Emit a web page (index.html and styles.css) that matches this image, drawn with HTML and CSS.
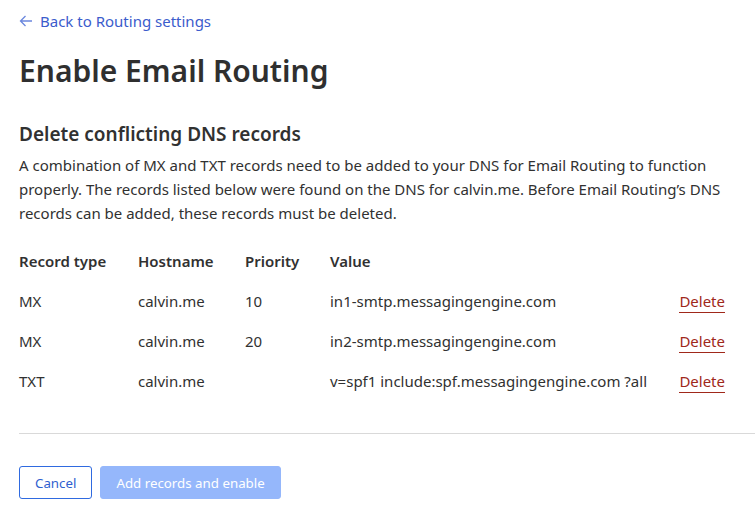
FILE: index.html
```html
<!DOCTYPE html>
<html>
<head>
<meta charset="utf-8">
<link rel="stylesheet" href="styles.css">
</head>
<body>
<div class="page">
  <a class="back" href="#"><svg class="arrow" width="14" height="14" viewBox="0 0 14 14"><path d="M13 7H1.5M6.5 2L1.5 7l5 5" fill="none" stroke="currentColor" stroke-width="1.3"/></svg>Back to Routing settings</a>
  <h1 class="title">Enable Email Routing</h1>
  <h2 class="subtitle">Delete conflicting DNS records</h2>
  <p class="desc">A combination of MX and TXT records need to be added to your DNS for Email Routing to function properly. The records listed below were found on the DNS for calvin.me. Before Email Routing’s DNS records can be added, these records must be deleted.</p>
  <div class="table">
    <div class="row head">
      <div class="c1">Record type</div><div class="c2">Hostname</div><div class="c3">Priority</div><div class="c4">Value</div><div class="c5"></div>
    </div>
    <div class="row">
      <div class="c1">MX</div><div class="c2">calvin.me</div><div class="c3">10</div><div class="c4">in1-smtp.messagingengine.com</div><div class="c5"><a class="del" href="#">Delete</a></div>
    </div>
    <div class="row">
      <div class="c1">MX</div><div class="c2">calvin.me</div><div class="c3">20</div><div class="c4">in2-smtp.messagingengine.com</div><div class="c5"><a class="del" href="#">Delete</a></div>
    </div>
    <div class="row">
      <div class="c1">TXT</div><div class="c2">calvin.me</div><div class="c3"></div><div class="c4">v=spf1 include:spf.messagingengine.com ?all</div><div class="c5"><a class="del" href="#">Delete</a></div>
    </div>
  </div>
  <hr class="divider">
  <div class="actions">
    <button class="btn cancel">Cancel</button>
    <button class="btn primary">Add records and enable</button>
  </div>
</div>
</body>
</html>
```
FILE: styles.css
```css
* { box-sizing: border-box; }
html, body { margin: 0; padding: 0; background: #fff; }
body {
  font-family: "Noto Sans", "Open Sans", sans-serif;
  color: #313131;
  font-size: 15px;
}
.page { padding: 10px 0 0 19px; }
.back {
  display: inline-flex;
  align-items: center;
  gap: 7px;
  color: #3b5ccc;
  text-decoration: none;
  font-size: 15px;
  line-height: 22px;
}
.arrow { color: #6b87de; }
.title {
  margin: 19px 0 0;
  font-size: 30px;
  font-weight: 600;
  line-height: 40px;
  color: #2f2f2f;
}
.subtitle {
  margin: 30px 0 0;
  font-size: 19px;
  font-weight: 600;
  line-height: 26px;
}
.desc {
  margin: 6px 0 0;
  line-height: 24px;
  max-width: 720px;
}
.table { margin-top: 26px; width: 706px; }
.row { display: flex; height: 40px; align-items: center; }
.row.head { font-weight: 600; height: 30px; align-items: flex-start; }
.c1 { width: 119px; }
.c2 { width: 107px; }
.c3 { width: 85px; }
.c4 { flex: 1; }
.c5 { width: 46px; text-align: right; }
.del {
  color: #a0281a;
  text-decoration: none;
  border-bottom: 1px solid #a0281a;
  padding-bottom: 1px;
}
.divider {
  margin: 32px 0 0;
  border: 0;
  border-top: 1px solid #d9d9d9;
}
.actions { display: flex; gap: 8px; margin-top: 32px; }
.btn {
  font-family: inherit;
  font-size: 13.3px;
  height: 33px;
  border-radius: 3px;
  padding: 0 15px;
}
.cancel {
  background: #fff;
  border: 1px solid #2f6ae0;
  color: #2f5fd0;
}
.primary {
  background: #95b7fb;
  border: 1px solid #95b7fb;
  color: #fff;
}
```
